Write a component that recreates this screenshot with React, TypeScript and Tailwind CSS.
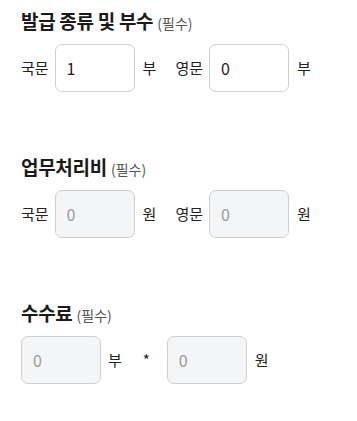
import React from "react";

const font = { fontFamily: '"Noto Sans CJK KR", "Noto Sans", sans-serif' };

function Heading({ title }: { title: string }) {
  return (
    <div className="flex items-baseline h-[26px] leading-[26px]">
      <span className="text-[19px] font-bold text-[#1a1a1a] tracking-[-0.3px]">{title}</span>
      <span className="ml-[4px] text-[14px] text-[#555]">(필수)</span>
    </div>
  );
}

function Box({ value, disabled }: { value: string; disabled?: boolean }) {
  return (
    <input
      readOnly
      disabled={disabled}
      value={disabled ? "" : value}
      placeholder={value}
      className={
        "w-[80px] h-[48px] rounded-[7px] border border-[#cfcfcf] px-[11px] text-[16px] outline-none " +
        (disabled ? "bg-[#f4f5f6] placeholder:text-[#9a9a9a]" : "bg-white text-[#222]")
      }
      style={font}
    />
  );
}

export default function App() {
  return (
    <div className="bg-white w-[357px] h-[421px] px-[21px] pt-[8px] text-[#222]" style={font}>
      <section>
        <Heading title="발급 종류 및 부수" />
        <div className="mt-[10px] flex items-center text-[15px]">
          <span className="mr-[6px]">국문</span>
          <Box value="1" />
          <span className="ml-[8px] mr-[19px]">부</span>
          <span className="mr-[6px]">영문</span>
          <Box value="0" />
          <span className="ml-[8px]">부</span>
        </div>
      </section>
      <section className="mt-[62px]">
        <Heading title="업무처리비" />
        <div className="mt-[10px] flex items-center text-[15px]">
          <span className="mr-[6px]">국문</span>
          <Box value="0" disabled />
          <span className="ml-[8px] mr-[19px]">원</span>
          <span className="mr-[6px]">영문</span>
          <Box value="0" disabled />
          <span className="ml-[8px]">원</span>
        </div>
      </section>
      <section className="mt-[62px]">
        <Heading title="수수료" />
        <div className="mt-[10px] flex items-center text-[15px]">
          <Box value="0" disabled />
          <span className="ml-[7px]">부</span>
          <span className="ml-[21px] mr-[17px]">*</span>
          <Box value="0" disabled />
          <span className="ml-[8px]">원</span>
        </div>
      </section>
    </div>
  );
}
